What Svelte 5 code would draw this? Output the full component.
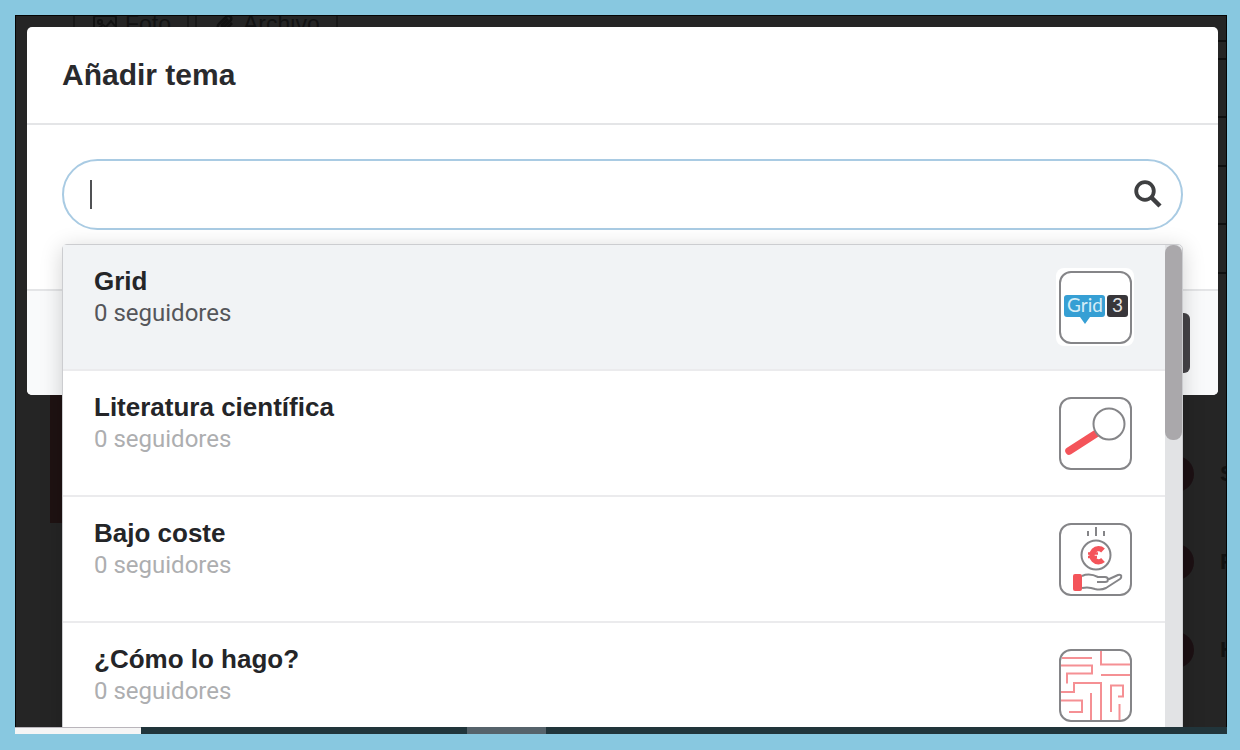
<script>
  const topics = [
    { name: 'Grid', followers: 0, icon: 'grid' },
    { name: 'Literatura científica', followers: 0, icon: 'magnifier' },
    { name: 'Bajo coste', followers: 0, icon: 'coin' },
    { name: '¿Cómo lo hago?', followers: 0, icon: 'maze' }
  ];
  const people = ['S', 'F', 'H'];
  let active = $state(0);
  let query = $state('');
</script>

<main class="frame">
  <div class="screen">
    <div class="page" aria-hidden="true">
      <div class="attach">
        <span class="chip">
          <svg width="24" height="20" viewBox="0 0 24 20" fill="none" stroke="currentColor" stroke-width="2"><rect x="1" y="2" width="22" height="16" rx="2" /><circle cx="7" cy="8" r="2" /><path d="M3 16l7-5 3 2 5-6 4 5" /></svg>
          Foto
        </span>
        <span class="chip">
          <svg width="20" height="20" viewBox="0 0 20 20" fill="none" stroke="currentColor" stroke-width="2.5"><path d="M17 9l-7 7a4 4 0 0 1-6-6l8-8a3 3 0 0 1 4 4l-7 7a1.500 1.500 0 0 1-2-2l6-6" /></svg>
          Archivo
        </span>
      </div>
      <div class="banner"></div>
      <div class="people">
        {#each people as person}
          <div class="person"><span class="dot"></span>{person}</div>
        {/each}
      </div>
      <div class="rules"><i></i><i></i><i></i></div>
    </div>

    <section class="modal" role="dialog" aria-labelledby="modal-title">
      <header><h1 id="modal-title">Añadir tema</h1></header>
      <div class="body">
        <div class="search">
          <input type="text" aria-label="Añadir tema" bind:value={query} />
          {#if !query}<span class="caret"></span>{/if}
          <button class="find" aria-label="Buscar">
            <svg width="28" height="28" viewBox="0 0 28 28" fill="none" stroke="#3e3f41"><circle cx="11" cy="11" r="8.800" stroke-width="3.800" /><path d="M17.500 17.500l8.500 8.500" stroke-width="4.500" /></svg>
          </button>
          <div class="dropdown">
            <ul>
              {#each topics as topic, i}
                <li>
                  <button class="topic" class:active={i === active} onmouseenter={() => (active = i)}>
                    <span class="text">
                      <span class="name">{topic.name}</span>
                      <span class="followers">{topic.followers} seguidores</span>
                    </span>
                    <svg class="icon" width="78" height="78" viewBox="0 0 78 78" fill="none" stroke="#858588" stroke-width="2" aria-hidden="true">
                      <rect width="78" height="78" rx="8" fill="#fff" stroke="none" />
                      {#if topic.icon === 'grid'}
                        <path d="M11 27h35q3 0 3 3v16q0 3-3 3H34l-5 7-5-7H11q-3 0-3-3V30q0-3 3-3z" fill="#369fd4" stroke="none" />
                        <rect x="51" y="27" width="21" height="22" rx="3" fill="#38363a" stroke="none" />
                        <text x="11" y="44" class="logo" fill="#d5edf7" stroke="none">Grid</text>
                        <text x="56" y="44" class="logo" fill="#e4e4e4" stroke="none">3</text>
                      {:else if topic.icon === 'magnifier'}
                        <path d="M41 39L13 57" stroke="#f4545a" stroke-width="7.500" stroke-linecap="round" />
                        <circle cx="53" cy="30" r="15.500" fill="#fff" />
                      {:else if topic.icon === 'coin'}
                        <path d="M32 11v5M40 7v9M48 11v5" />
                        <circle cx="40" cy="35" r="14.500" />
                        <path d="M47 30.500a6.500 6.500 0 1 0 0 9.500" stroke="#f4545a" stroke-width="5.500" />
                        <path d="M32 33.500h10M32 37h9" stroke="#f4545a" stroke-width="2.500" />
                        <rect x="17" y="54" width="9" height="17" rx="2" fill="#f4545a" stroke="none" />
                        <path d="M26 56c7-3 12-1 16 1h7c4 0 4 5 0 5h-8M51 60l11-5c4-1 4 2 2 4L50 68c-4 2-7 2-11 1-5-2-9-2-13-1" stroke-linejoin="round" />
                      {:else}
                        <path d="M6 12h30M5 19.500h31v8H11v10M5 46h13v-9h27v37M35 47v27M5 54.500h21V66H13M45 5v13.500h29M45 29h29M55 66V39.500h12v11h-5M63.500 58v16" stroke="#f59094" />
                      {/if}
                      <rect x="4" y="4" width="71" height="71" rx="11" />
                    </svg>
                  </button>
                </li>
              {/each}
            </ul>
            <div class="track"><div class="thumb"></div></div>
          </div>
        </div>
      </div>
      <footer><button class="submit" aria-label="Añadir"></button></footer>
    </section>
  </div>
  <div class="taskbar"><span class="start"></span><span class="task"></span></div>
</main>

<style>
  :global(body) { margin: 0; background: #88c8e0; }
  * { box-sizing: border-box; }
  .frame {
    display: flex;
    flex-direction: column;
    height: 100vh;
    padding: 15px 13px 16px 15px;
    font-family: Roboto, "Liberation Sans", sans-serif;
  }
  .screen {
    position: relative;
    flex: 1;
    min-height: 0;
    overflow: hidden;
    padding: 11px 8px 0 11px;
    border: solid #050505;
    border-width: 1px 1px 0;
    background: #252525;
  }
  .page { position: absolute; inset: 0; color: #121212; font: 700 22px "Liberation Sans", sans-serif; }
  .attach { position: absolute; top: -14px; left: 57px; display: flex; gap: 6px; }
  .chip { display: flex; align-items: center; gap: 8px; height: 44px; padding: 0 16px 0 18px; border: 2px solid #191919; font-size: 23px; font-weight: 400; }
  .banner { position: absolute; left: 34px; top: 300px; width: 40px; height: 207px; background: #1e1212; }
  .people { position: absolute; right: -10px; top: 442px; display: grid; gap: 56px; }
  .person { display: flex; align-items: center; gap: 26px; height: 32px; }
  .dot { width: 36px; height: 36px; border-radius: 50%; background: #1c1013; }
  .rules { position: absolute; top: 24px; right: 0; display: grid; gap: 56px; width: 9px; }
  .rules i { height: 51px; border: solid #101010; border-width: 2px 0; }
  .rules i:first-child { height: 20px; }

  .modal { position: relative; border-radius: 5px; background: #fff; }
  header { padding: 32px 35px; border-bottom: 2px solid #e4e5e7; }
  h1 { margin: 0; font: 700 30px/32px "Liberation Sans", sans-serif; color: #292a2d; }
  .body { padding: 34px 35px 59px; }
  .search { position: relative; z-index: 1; }
  input {
    display: block;
    width: 100%;
    height: 71px;
    padding: 0 72px 0 27px;
    border: 2px solid #a9cbe3;
    border-radius: 36px;
    outline: none;
    background: #fff;
    font: 24px Roboto, sans-serif;
  }
  .caret { position: absolute; left: 28px; top: 21px; width: 2px; height: 29px; background: #505154; pointer-events: none; }
  button { border: 0; padding: 0; background: none; font: inherit; }
  .find { position: absolute; right: 21px; top: 21px; height: 28px; }
  .find svg { display: block; }
  .dropdown {
    position: absolute;
    top: 85px;
    left: 0;
    right: 0;
    display: flex;
    border: 1px solid #cccdd0;
    border-radius: 5px;
    background: #fff;
    box-shadow: 0 4px 22px rgb(0 0 0 / 18%);
  }
  ul { flex: 1; margin: 0; padding: 0; list-style: none; }
  .topic {
    display: flex;
    justify-content: space-between;
    align-items: flex-start;
    width: 100%;
    height: 126px;
    padding: 20px 31px 0;
    border-bottom: 2px solid #ebebed;
    text-align: left;
    color: #adaeb0;
  }
  .topic.active { background: #f1f3f5; color: #55565a; }
  .text { display: grid; line-height: 32px; }
  .name { font-family: "Liberation Sans", sans-serif; font-size: 26px; font-weight: 700; color: #242528; }
  .followers { font-size: 24px; }
  .icon { margin-top: 3px; }
  .logo { font: 19px Lato, sans-serif; }
  .track { width: 17px; background: #e2e3e5; border-radius: 0 5px 0 0; }
  .thumb { height: 195px; border-radius: 8px; background: #aaa8ab; }
  footer { display: flex; justify-content: flex-end; padding: 22px 28px; border-top: 2px solid #e4e5e7; background: #f9fafb; border-radius: 0 0 5px 5px; }
  .submit { width: 130px; height: 60px; border-radius: 6px; background: #454347; }
  .taskbar { display: flex; height: 7px; background: #21353b; }
  .start { width: 126px; background: #f5f5f5; border-top: 1px solid #b9b5bb; }
  .task { width: 79px; margin-left: 326px; background: #56636b; }
</style>
